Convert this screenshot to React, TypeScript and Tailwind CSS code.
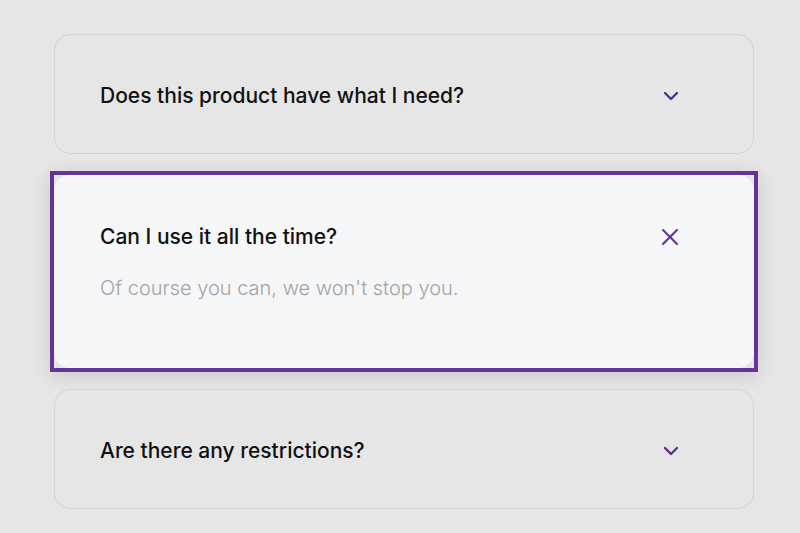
import React from "react";
import { ChevronDown, X } from "lucide-react";

const faqs = [
  { q: "Does this product have what I need?", a: "Yes, it covers everything you need to get started." },
  { q: "Can I use it all the time?", a: "Of course you can, we won't stop you." },
  { q: "Are there any restrictions?", a: "No, there are none at all." },
];

export default function App() {
  const [open, setOpen] = React.useState<number>(1);

  return (
    <div
      className="min-h-[533px] w-full bg-[#e6e6e6] pt-[34px]"
      style={{ fontFamily: "Inter, 'Noto Sans', sans-serif" }}
    >
      <div className="ml-[54px] flex w-[700px] flex-col gap-[21px]">
        {faqs.map((item, i) =>
          open === i ? (
            <div key={item.q} className="-mx-1 -my-1 border-4 border-[#663399] shadow-[0_4px_18px_rgba(0,0,0,0.12)]">
              <div className="rounded-2xl bg-[#f5f6f8] pl-[46px] pr-[70px] pt-[48px] pb-[66px]">
                <button
                  onClick={() => setOpen(-1)}
                  className="flex w-full items-center justify-between text-left"
                >
                  <span className="text-[21px] leading-[28px] font-medium text-[#111111]">{item.q}</span>
                  <X size={28} strokeWidth={1.8} className="text-[#663399]" />
                </button>
                <p className="mt-[23px] text-[20px] leading-[28px] font-light text-[#a3a3a6]">{item.a}</p>
              </div>
            </div>
          ) : (
            <button
              key={item.q}
              onClick={() => setOpen(i)}
              className="flex h-[120px] w-full items-center justify-between rounded-2xl border border-[#d4d4d4] bg-[#e6e6e6] pl-[45px] pr-[70px] pt-[3px] text-left"
            >
              <span className="text-[21px] leading-[28px] font-medium text-[#111111]">{item.q}</span>
              <ChevronDown size={24} strokeWidth={2.4} className="text-[#5b2d8e]" />
            </button>
          )
        )}
      </div>
    </div>
  );
}
